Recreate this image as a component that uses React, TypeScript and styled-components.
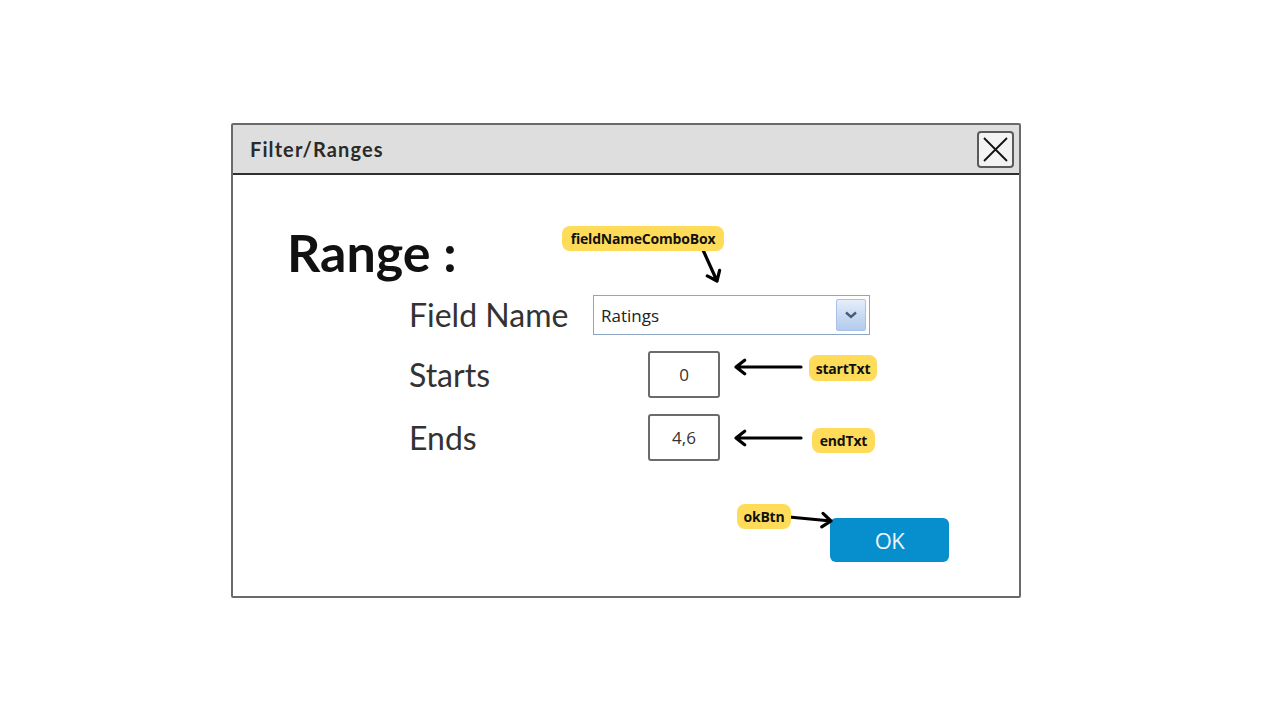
import React from "react";
import styled, { createGlobalStyle } from "styled-components";

const GlobalStyle = createGlobalStyle`
  html, body { margin: 0; padding: 0; background: #ffffff; }
  body { font-family: Lato, "Open Sans", sans-serif; }
`;

const Page = styled.div`
  width: 1280px;
  height: 720px;
  box-sizing: border-box;
  padding: 123px 0 0 231px;
`;

const Dialog = styled.div`
  position: relative;
  width: 790px;
  height: 475px;
  box-sizing: border-box;
  border: 2px solid #6a6a6a;
  border-radius: 2px;
  background: #ffffff;
  display: flex;
  flex-direction: column;
`;

const TitleBar = styled.div`
  height: 50px;
  box-sizing: border-box;
  background: #dedede;
  border-bottom: 2px solid #2e2e2e;
  display: flex;
  align-items: center;
  justify-content: space-between;
  padding: 0 5px 0 17px;
`;

const Title = styled.span`
  font-family: Lato, sans-serif;
  font-weight: 700;
  font-size: 20px;
  color: #2a2a2a;
  letter-spacing: 1.1px;
`;

const CloseButton = styled.div`
  width: 37px;
  height: 37px;
  box-sizing: border-box;
  border: 2px solid #5a5a5a;
  border-radius: 4px;
  background: #f3f3f3;
  display: flex;
  align-items: center;
  justify-content: center;
`;

const Body = styled.div`
  flex: 1;
  display: flex;
  flex-direction: column;
  padding: 46px 70px 0 54px;
`;

const Heading = styled.h1`
  margin: 0;
  font-family: Lato, sans-serif;
  font-weight: 700;
  font-size: 52px;
  line-height: 1.2;
  color: #111111;
`;

const Form = styled.div`
  margin: 12px 0 0 122px;
  display: grid;
  grid-template-columns: 184px auto;
  row-gap: 16px;
  align-items: center;
`;

const Label = styled.span`
  font-family: Lato, sans-serif;
  font-size: 32px;
  line-height: 1.2;
  color: #333333;
`;

const Combo = styled.div`
  width: 277px;
  height: 40px;
  box-sizing: border-box;
  border: 1px solid #8aa6c2;
  background: #ffffff;
  display: flex;
  align-items: center;
  justify-content: space-between;
  padding: 3px 3px 3px 7px;
`;

const ComboText = styled.span`
  font-family: "Open Sans", sans-serif;
  font-size: 17px;
  color: #222222;
`;

const ComboButton = styled.div`
  width: 30px;
  height: 32px;
  box-sizing: border-box;
  border: 1px solid #a9c1e2;
  border-radius: 2px;
  background: linear-gradient(180deg, #e6eefa 0%, #c9dbf3 50%, #b3cbee 100%);
  display: flex;
  align-items: center;
  justify-content: center;
`;

const TextBox = styled.div`
  margin-left: 55px;
  width: 72px;
  height: 47px;
  box-sizing: border-box;
  border: 2px solid #6b6b6b;
  border-radius: 3px;
  background: #ffffff;
  display: flex;
  align-items: center;
  justify-content: center;
  font-family: "Open Sans", sans-serif;
  font-size: 17px;
  color: #333333;
`;

const Footer = styled.div`
  margin-top: 57px;
  display: flex;
  justify-content: flex-end;
`;

const OkButton = styled.button`
  width: 119px;
  height: 44px;
  border: none;
  border-radius: 6px;
  background: #078ecd;
  color: #eef7fc;
  font-family: "Open Sans", sans-serif;
  font-weight: 500;
  font-size: 22px;
  letter-spacing: -0.5px;
  padding: 0;
`;

const Overlay = styled.svg`
  position: absolute;
  left: 0;
  top: 0;
  width: 786px;
  height: 471px;
  pointer-events: none;
`;

const Tag = styled.div<{ $x: number; $y: number; $w: number; $h: number }>`
  position: absolute;
  left: ${(p) => p.$x}px;
  top: ${(p) => p.$y}px;
  width: ${(p) => p.$w}px;
  height: ${(p) => p.$h}px;
  box-sizing: border-box;
  background: #ffdb5a;
  border-radius: 8px;
  display: flex;
  align-items: center;
  justify-content: center;
  font-family: "Open Sans", sans-serif;
  font-weight: 700;
  font-size: 14px;
  letter-spacing: -0.2px;
  color: #111111;
  white-space: nowrap;
`;

type Arrow = { x1: number; y1: number; x2: number; y2: number };

function arrowPath({ x1, y1, x2, y2 }: Arrow) {
  const dx = x2 - x1;
  const dy = y2 - y1;
  const len = Math.hypot(dx, dy);
  const ux = dx / len;
  const uy = dy / len;
  const hl = 11;
  const a = (38 * Math.PI) / 180;
  const rot = (ang: number) => ({
    x: x2 - hl * (ux * Math.cos(ang) - uy * Math.sin(ang)),
    y: y2 - hl * (ux * Math.sin(ang) + uy * Math.cos(ang)),
  });
  const p1 = rot(a);
  const p2 = rot(-a);
  return `M${x1} ${y1} L${x2} ${y2} M${p1.x} ${p1.y} L${x2} ${y2} L${p2.x} ${p2.y}`;
}

const arrows: Arrow[] = [
  { x1: 470, y1: 125, x2: 484, y2: 156 },
  { x1: 568, y1: 242, x2: 503, y2: 242 },
  { x1: 568, y1: 313, x2: 503, y2: 313 },
  { x1: 556, y1: 392, x2: 598, y2: 396 },
];

export default function App() {
  return (
    <>
      <GlobalStyle />
      <Page>
        <Dialog>
          <TitleBar>
            <Title>Filter/Ranges</Title>
            <CloseButton>
              <svg width="27" height="27" viewBox="0 0 27 27">
                <path d="M2 2 L25 25 M25 2 L2 25" stroke="#111" strokeWidth="1.8" fill="none" />
              </svg>
            </CloseButton>
          </TitleBar>
          <Body>
            <Heading>Range :</Heading>
            <Form>
              <Label>Field Name</Label>
              <Combo>
                <ComboText>Ratings</ComboText>
                <ComboButton>
                  <svg width="14" height="10" viewBox="0 0 14 10">
                    <path d="M2 2.5 L7 7 L12 2.5" stroke="#4b5b73" strokeWidth="2.4" fill="none" />
                  </svg>
                </ComboButton>
              </Combo>
              <Label>Starts</Label>
              <TextBox>0</TextBox>
              <Label>Ends</Label>
              <TextBox>4,6</TextBox>
            </Form>
            <Footer>
              <OkButton>OK</OkButton>
            </Footer>
          </Body>
          <Overlay viewBox="0 0 786 471">
            {arrows.map((a, i) => (
              <path
                key={i}
                d={arrowPath(a)}
                stroke="#000"
                strokeWidth="3.2"
                strokeLinecap="round"
                strokeLinejoin="round"
                fill="none"
              />
            ))}
          </Overlay>
          <Tag $x={329} $y={101} $w={162} $h={25}>fieldNameComboBox</Tag>
          <Tag $x={576} $y={230} $w={68} $h={26}>startTxt</Tag>
          <Tag $x={579} $y={303} $w={63} $h={25}>endTxt</Tag>
          <Tag $x={504} $y={379} $w={54} $h={25}>okBtn</Tag>
        </Dialog>
      </Page>
    </>
  );
}
